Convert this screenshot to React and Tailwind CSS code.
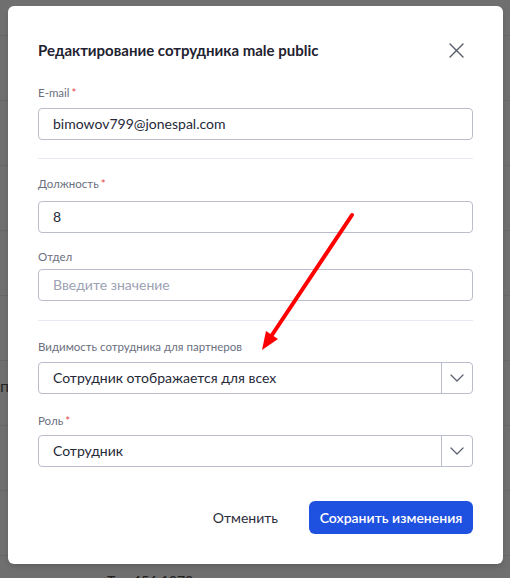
import React from 'react'

const rows = [0, 1, 2, 3, 4, 5, 6, 7, 8]

function Label({ children, required, className = '' }) {
  return (
    <div className={`text-[11.5px] leading-4 text-[#6b7080] ${className}`}>
      {children}
      {required && <span className="ml-0.5 text-[#e5484d]">*</span>}
    </div>
  )
}

function Input({ value, placeholder, className = '' }) {
  return (
    <div
      className={`flex h-8 items-center rounded border border-[#babdcc] px-[14px] text-sm ${
        value ? 'text-[#262938]' : 'text-[#9ca1b3]'
      } ${className}`}
    >
      {value || placeholder}
    </div>
  )
}

function Select({ value, className = '' }) {
  return (
    <div className={`flex h-8 rounded border border-[#babdcc] text-sm text-[#262938] ${className}`}>
      <div className="flex flex-1 items-center px-[14px]">{value}</div>
      <div className="flex w-[31px] items-center justify-center border-l border-[#babdcc]">
        <svg width="14" height="8" viewBox="0 0 14 8" fill="none">
          <path d="M1 1l6 6 6-6" stroke="#5d6273" strokeWidth="1.3" strokeLinecap="round" strokeLinejoin="round" />
        </svg>
      </div>
    </div>
  )
}

export default function App() {
  return (
    <div className="relative h-[578px] w-[510px] overflow-hidden bg-[#6f6f6f] font-['Lato','Noto_Sans',sans-serif]">
      {/* dimmed page behind the dialog */}
      <div className="pt-[35px]">
        {rows.map((r) => (
          <div key={r} className="h-[65px] border-t border-[#676767]" />
        ))}
      </div>
      <div className="absolute left-0 top-[374px] text-base text-[#262626]">п</div>
      <div className="absolute left-[107px] top-[571px] text-sm font-semibold text-[#222]">Тел 456 1373</div>

      {/* dialog */}
      <div className="absolute left-2 top-[6px] h-[558px] w-[495px] rounded-md bg-white px-[30px] pt-8 shadow-md">
        <div className="flex h-6 items-center justify-between">
          <h2 className="text-[15px] font-bold text-[#1f2230]">Редактирование сотрудника male public</h2>
          <button className="mr-[5px] flex h-6 w-6 items-center justify-center">
            <svg width="15" height="15" viewBox="0 0 15 15" fill="none">
              <path d="M1 1l13 13M14 1L1 14" stroke="#555a69" strokeWidth="1.4" strokeLinecap="round" />
            </svg>
          </button>
        </div>

        <Label required className="mt-[23px]">E-mail</Label>
        <Input value="bimowov799@jonespal.com" className="mt-[7px]" />

        <div className="mt-[18px] h-px bg-[#e8ebf3]" />

        <Label required className="mt-[17px]">Должность</Label>
        <Input value="8" className="mt-[9px]" />

        <Label className="mt-4">Отдел</Label>
        <Input placeholder="Введите значение" className="mt-1" />

        <div className="mt-[19px] h-px bg-[#e8ebf3]" />

        <Label className="mt-[18px]">Видимость сотрудника для партнеров</Label>
        <Select value="Сотрудник отображается для всех" className="mt-[7px]" />

        <Label required className="mt-[19px]">Роль</Label>
        <Select value="Сотрудник" className="mt-1.5" />

        <div className="mt-[34px] flex items-center justify-end gap-[31px]">
          <button className="text-sm text-[#2b2e3b]">Отменить</button>
          <button className="h-[33px] w-[164px] rounded-md bg-[#1f51e0] text-sm font-semibold text-white">
            Сохранить изменения
          </button>
        </div>
      </div>

      {/* annotation arrow */}
      <svg className="absolute left-0 top-0" width="510" height="578" viewBox="0 0 510 578">
        <line x1="352" y1="215" x2="272" y2="335" stroke="#ff0000" strokeWidth="4" strokeLinecap="round" />
        <polygon points="262,350 278,339 266,331" fill="#ff0000" />
      </svg>
    </div>
  )
}
